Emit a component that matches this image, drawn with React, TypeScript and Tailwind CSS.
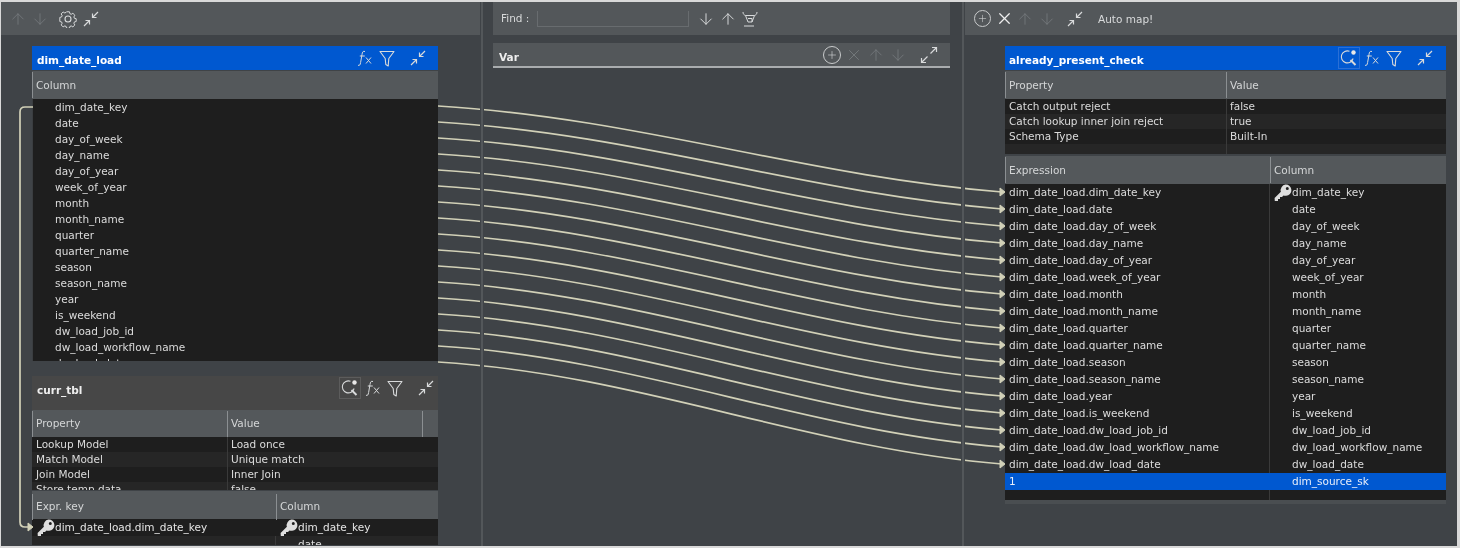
import { ArrowDown, ArrowUp, Plus, X } from 'lucide-react';

const COLUMNS = [
  'dim_date_key', 'date', 'day_of_week', 'day_name', 'day_of_year', 'week_of_year', 'month', 'month_name',
  'quarter', 'quarter_name', 'season', 'season_name', 'year', 'is_weekend', 'dw_load_job_id',
  'dw_load_workflow_name', 'dw_load_date',
];

function Collapse({ className = 'text-[#d8dadb]' }: { className?: string }) {
  return (
    <svg width="18" height="18" viewBox="0 0 18 18" fill="none" stroke="currentColor" strokeWidth="1.2" className={className}>
      <path d="M16 2 10.500 7.500M10.500 3.500v4h4M2 16l5.500-5.500M3.500 10.500h4v4" />
    </svg>
  );
}

function Expand({ className = 'text-[#d8dadb]' }: { className?: string }) {
  return (
    <svg width="18" height="18" viewBox="0 0 18 18" fill="none" stroke="currentColor" strokeWidth="1.2" className={className}>
      <path d="M10.500 7.500 16.500 1.500M12 1.500h4.500V6M7.500 10.500l-6 6M1.500 12v4.500H6" />
    </svg>
  );
}

function Gear() {
  return (
    <svg width="18" height="18" viewBox="0 0 18 18" fill="none" stroke="#d8dadb" strokeWidth="1.1">
      <path d="M7.400 1h3.200l.5 2.100 1.500.7 1.900-1.100 2.200 2.200-1.100 1.900.6 1.500 2 .5v3.100l-2 .5-.6 1.500 1.100 1.900-2.200 2.200-1.900-1.100-1.500.6-.5 2.100H7.400l-.5-2.100-1.500-.6-1.900 1.100-2.200-2.200 1.100-1.900-.6-1.500-2-.5V7.300l2-.5.6-1.500-1.100-1.900 2.200-2.200 1.900 1.100 1.500-.7z" transform="translate(1 .9) scale(.89)" />
      <circle cx="9" cy="9" r="3" />
    </svg>
  );
}

function Fx({ className = 'text-[#d8dadb]' }: { className?: string }) {
  return (
    <svg width="16" height="17" viewBox="0 0 16 17" fill="none" stroke="currentColor" strokeWidth="1" className={className}>
      <path d="M8 1.500C6 .8 5.400 2 5 4.500L3.600 12.500C3.200 15 2.500 16 1 15.200M2.800 6h5" />
      <path d="M9 7.500l5 6M14 7.500l-5 6" />
    </svg>
  );
}

function Funnel({ className = 'text-[#d8dadb]' }: { className?: string }) {
  return (
    <svg width="16" height="17" viewBox="0 0 16 17" fill="none" stroke="currentColor" strokeWidth="1.1" className={className}>
      <path d="M1 1.500h14L9.800 8.500l-.6 7.500-2.400-1.500-.6-6z" strokeLinejoin="round" />
    </svg>
  );
}

function SearchDot() {
  return (
    <svg width="18" height="18" viewBox="0 0 18 18" fill="none" stroke="#d8dadb" strokeWidth="1.1">
      <path d="M9.500 2.300a6 6 0 1 0 3.600 7.200" />
      <circle cx="13.500" cy="3.500" r="2.200" fill="#e8e8e8" stroke="none" />
      <path d="m10.500 11 5 5" strokeWidth="2" />
    </svg>
  );
}

function Key() {
  return (
    <svg width="18" height="18" viewBox="0 0 18 18" className="shrink-0">
      <path
        fill="#dedede"
        fillRule="evenodd"
        d="M11.500.6a5.600 5.600 0 0 1 .6 11.200c-1 .1-1.900 0-2.600-.4L8 12.900H6v2H4v2H.8L.6 14l6.300-6.200a5.600 5.600 0 0 1 4.600-7.200Zm1.800 2.400a1.500 1.500 0 1 0 0 3 1.500 1.500 0 0 0 0-3Z"
      />
    </svg>
  );
}

function HeadCell({ label, className = '' }: { label: string; className?: string }) {
  return (
    <div className={`flex h-[26px] items-center border-l border-[#8b8f92] pt-px pl-[3px] ${className}`}>{label}</div>
  );
}

function TableIcons({ searchBorder }: { searchBorder?: string }) {
  return (
    <div className="flex items-center">
      {searchBorder && (
        <div className={`mr-[4px] flex size-[22px] items-center justify-center border ${searchBorder}`}>
          <SearchDot />
        </div>
      )}
      <Fx />
      <Funnel className="mr-[14px] ml-[6px] text-[#d8dadb]" />
      <Collapse />
    </div>
  );
}

function Separator() {
  // sits above the connector lines, which break where they cross it
  return (
    <div className="relative z-10 flex w-[4px] shrink-0 justify-center bg-[#3f4347]">
      <div className="w-[2px] bg-[#53575a]" />
    </div>
  );
}

function Connectors() {
  return (
    <svg width="1460" height="548" className="pointer-events-none absolute top-0 left-0" fill="none">
      {COLUMNS.map((name, i) => {
        const y1 = 106 + i * 16;
        const y2 = 192 + i * 17;
        return (
          <g key={name} stroke="#d2d1b8" strokeWidth="1.7">
            <path d={`M438 ${y1}C638 ${y1 + 12} 805 ${y2 - 16} 1002 ${y2}`} />
            <path d={`M1000 ${y2 - 4}l5 4-5 4z`} fill="#d2d1b8" strokeWidth="1" />
          </g>
        );
      })}
      <g stroke="#d2d1b8" strokeWidth="1.7">
        <path d="M33 107H25q-5 0-5 5V522q0 5 5 5h5" />
        <path d="M28 523l5 4-5 4z" fill="#d2d1b8" strokeWidth="1" />
      </g>
    </svg>
  );
}

function PropertyRows({ rows, widthClass, lastClass }: { rows: string[][]; widthClass: string; lastClass: string }) {
  return (
    <div className="bg-[#1e1e1e] text-[#dcdcdc]">
      {rows.map(([k, v], i) => (
        <div
          key={i}
          className={`flex overflow-hidden ${i % 2 ? 'bg-[#262626]' : 'bg-[#1e1e1e]'} ${i === rows.length - 1 ? lastClass : 'h-[15px]'}`}
        >
          <div className={`${widthClass} shrink-0 pl-[4px] leading-[15px]`}>{k}</div>
          <div className="flex-1 border-l border-[#3a3a3a] pl-[3px] leading-[15px]">{v}</div>
        </div>
      ))}
    </div>
  );
}

function LeftColumn() {
  return (
    <div className="flex w-[479px] shrink-0 flex-col">
      <div className="flex h-[33px] shrink-0 items-center gap-[4px] bg-[#53575a] pl-[8px]">
        <ArrowUp size={18} strokeWidth={1} className="text-[#7a7e81]" />
        <ArrowDown size={18} strokeWidth={1} className="text-[#7a7e81]" />
        <div className="ml-[6px] flex items-center gap-[5px]">
          <Gear />
          <Collapse />
        </div>
      </div>
      <div className="flex flex-1 flex-col pt-[11px] pl-[31px]">
        <div className="w-[406px]">
          <div className="flex h-[24px] items-center justify-between bg-[#0058d0] pr-[11px] pl-[5px]">
            <span className="pt-[6px] font-bold text-white">dim_date_load</span>
            <TableIcons />
          </div>
          <div className="mt-px flex h-[28px] items-center bg-[#54585b] text-[#d4d6d7]">
            <HeadCell label="Column" />
          </div>
          <div className="h-[262px] overflow-hidden border-l border-[#3a3d40] bg-[#1e1e1e] pl-[22px] text-[#dcdcdc]">
            {COLUMNS.map((c) => (
              <div key={c} className="h-[16px] leading-[16px]">{c}</div>
            ))}
          </div>
        </div>
        <div className="mt-[15px] w-[406px]">
          <div className="flex h-[34px] items-start justify-between bg-[#474747] pr-[3px] pl-[5px]">
            <span className="pt-[7px] font-bold text-[#eeeeee]">curr_tbl</span>
            <div className="pt-[1px]">
              <TableIcons searchBorder="border-[#5c5c5c]" />
            </div>
          </div>
          <div className="flex h-[27px] items-center bg-[#54585b] text-[#d4d6d7]">
            <HeadCell label="Property" className="w-[195px]" />
            <HeadCell label="Value" className="w-[195px]" />
            <div className="h-[26px] border-l border-[#8b8f92]" />
          </div>
          <PropertyRows
            widthClass="w-[195px]"
            lastClass="h-[8px]"
            rows={[
              ['Lookup Model', 'Load once'],
              ['Match Model', 'Unique match'],
              ['Join Model', 'Inner Join'],
              ['Store temp data', 'false'],
            ]}
          />
          <div className="mt-px flex h-[28px] items-center bg-[#54585b] pt-[3px] text-[#d4d6d7]">
            <HeadCell label="Expr. key" className="w-[244px]" />
            <HeadCell label="Column" />
          </div>
          <div className="flex h-[17px] items-center bg-[#1e1e1e] text-[#e4e4e4]">
            <div className="flex w-[244px] items-center pl-[5px]"><Key /><span className="pt-px">dim_date_load.dim_date_key</span></div>
            <div className="flex items-center pl-[4px]"><Key /><span className="pt-px">dim_date_key</span></div>
          </div>
          <div className="flex h-[9px] overflow-hidden bg-[#262626] text-[#dcdcdc]">
            <div className="w-[244px] border-r border-[#3a3a3a]" />
            <div className="pt-px pl-[22px] leading-[15px]">date</div>
          </div>
        </div>
      </div>
    </div>
  );
}

function CenterColumn() {
  return (
    <div className="flex w-[477px] shrink-0 flex-col pr-[11px] pl-[9px]">
      <div className="flex h-[33px] shrink-0 items-center bg-[#53575a] pl-[8px] text-[#d8dadb]">
        <span className="pt-px font-medium">Find :</span>
        <div className="mx-[8px] h-[16px] w-[152px] border-x border-b border-[#686c6f]" />
        <ArrowDown size={18} strokeWidth={1.3} />
        <ArrowUp size={18} strokeWidth={1.3} className="ml-[4px]" />
        <svg width="16" height="18" viewBox="0 0 16 18" fill="none" stroke="#d8dadb" strokeWidth="1" className="ml-[5px]">
          <path d="M1 2c0 2 1 3 2.500 3.500h9C14 5 15 4 15 2M3.500 5.500 6 12h4l2.500-6.500M6 8.500h4v3.500M2 16h10" />
        </svg>
      </div>
      <div className="mt-[8px] flex h-[25px] items-center justify-between border-b-2 border-[#a9acae] bg-[#53575a] pr-[12px] pl-[6px]">
        <span className="pt-[6px] font-bold text-[#eeeeee]">Var</span>
        <div className="flex items-center gap-[4px]">
          <div className="flex size-[18px] items-center justify-center rounded-full border border-[#c9cbcc]">
            <Plus size={12} strokeWidth={1.2} className="text-[#d8dadb]" />
          </div>
          <X size={18} strokeWidth={1.1} className="text-[#7a7e81]" />
          <ArrowUp size={18} strokeWidth={1} className="text-[#7a7e81]" />
          <ArrowDown size={18} strokeWidth={1} className="mr-[9px] text-[#7a7e81]" />
          <Expand />
        </div>
      </div>
    </div>
  );
}

function RightColumn() {
  return (
    <div className="flex flex-1 flex-col">
      <div className="flex h-[33px] shrink-0 items-center bg-[#53575a] pl-[9px] text-[#d8dadb]">
        <div className="flex size-[17px] items-center justify-center rounded-full border border-[#c9cbcc]">
          <Plus size={11} strokeWidth={1.2} />
        </div>
        <X size={19} strokeWidth={1.6} className="ml-[4px] text-[#eeeeee]" />
        <ArrowUp size={18} strokeWidth={1} className="ml-[2px] text-[#7a7e81]" />
        <ArrowDown size={18} strokeWidth={1} className="ml-[4px] text-[#7a7e81]" />
        <Collapse className="ml-[10px] text-[#d8dadb]" />
        <span className="ml-[14px] pt-[3px]">Auto map!</span>
      </div>
      <div className="pt-[11px] pl-[40px]">
        <div className="w-[441px] border-b-4 border-[#4a4e51]">
          <div className="flex h-[24px] items-center justify-between bg-[#0058d0] pr-[12px] pl-[4px]">
            <span className="pt-[6px] font-bold text-white">already_present_check</span>
            <TableIcons searchBorder="border-[#2a6fd6]" />
          </div>
          <div className="mt-px flex h-[28px] items-center bg-[#54585b] text-[#d4d6d7]">
            <HeadCell label="Property" className="w-[221px]" />
            <HeadCell label="Value" />
          </div>
          <PropertyRows
            widthClass="w-[221px]"
            lastClass="h-[10px]"
            rows={[
              ['Catch output reject', 'false'],
              ['Catch lookup inner join reject', 'true'],
              ['Schema Type', 'Built-In'],
              ['', ''],
            ]}
          />
          <div className="mt-[2px] flex h-[28px] items-center bg-[#54585b] text-[#d4d6d7]">
            <HeadCell label="Expression" className="w-[265px]" />
            <HeadCell label="Column" />
          </div>
          <div className="bg-[#1e1e1e] text-[#dcdcdc]">
            {COLUMNS.map((c, i) => (
              <div key={c} className="flex h-[17px] items-center">
                <div className="flex h-full w-[265px] shrink-0 items-center border-r border-[#3a3a3a] pl-[4px]">dim_date_load.{c}</div>
                <div className="flex items-center pl-[4px]">
                  {i === 0 ? <Key /> : <div className="w-[18px]" />}
                  <span>{c}</span>
                </div>
              </div>
            ))}
            <div className="flex h-[17px] items-center bg-[#0058d0] text-[#e8eefa]">
              <div className="w-[265px] shrink-0 pl-[4px]">1</div>
              <div className="pl-[22px]">dim_source_sk</div>
            </div>
            <div className="flex h-[10px]">
              <div className="w-[265px] border-r border-[#3a3a3a]" />
            </div>
          </div>
        </div>
      </div>
    </div>
  );
}

export default function App() {
  return (
    <div className="relative h-[548px] w-[1460px] overflow-hidden bg-[#d9d9d9] py-[2px] pr-[3px] pl-[1px] font-['DejaVu_Sans',sans-serif] text-[10.5px] blur-[0.5px]">
      <div className="flex h-[544px] bg-[#3f4347]">
        <LeftColumn />
        <Separator />
        <CenterColumn />
        <Separator />
        <RightColumn />
      </div>
      <Connectors />
    </div>
  );
}
